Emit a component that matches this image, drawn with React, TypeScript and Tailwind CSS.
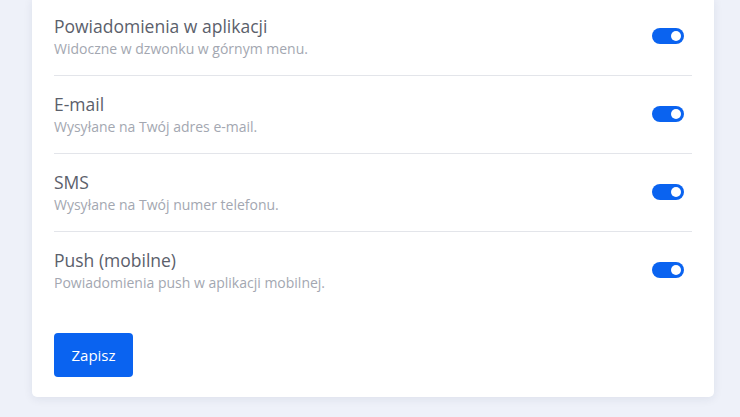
const items = [
  { title: "Powiadomienia w aplikacji", desc: "Widoczne w dzwonku w górnym menu." },
  { title: "E-mail", desc: "Wysyłane na Twój adres e-mail." },
  { title: "SMS", desc: "Wysyłane na Twój numer telefonu." },
  { title: "Push (mobilne)", desc: "Powiadomienia push w aplikacji mobilnej." },
];

const Toggle = () => (
  <div className="flex h-4 w-8 items-center justify-end rounded-full bg-[#0a63f0] px-[3px]">
    <div className="h-[10px] w-[10px] rounded-full bg-white" />
  </div>
);

export default function App() {
  return (
    <div className="h-[417px] w-[740px] overflow-hidden bg-[#eef1f9] font-['Open_Sans',sans-serif]">
      <div className="mx-[32px] -mt-[2px] w-[682px] rounded-b-[5px] bg-white px-[22px] pb-[20px] shadow-[0_2px_10px_rgba(30,40,80,0.08)]">
        {items.map((it, i) => (
          <div
            key={it.title}
            className={
              "flex items-center justify-between pt-[17px] pb-[16px] " +
              (i < items.length - 1 ? "border-b border-[#e3e5ea]" : "")
            }
          >
            <div className="flex flex-col gap-[2px]">
              <div className="text-[17.5px] leading-[22px] text-[#5b606b]">{it.title}</div>
              <div className="text-[14px] leading-[20px] text-[#a3a7b1]">{it.desc}</div>
            </div>
            <div className="mr-[8px] -mt-[2px]">
              <Toggle />
            </div>
          </div>
        ))}
        <button className="mt-[24px] h-[44px] w-[79px] rounded-[4px] bg-[#0a63f0] text-[15px] text-white">
          Zapisz
        </button>
      </div>
    </div>
  );
}
